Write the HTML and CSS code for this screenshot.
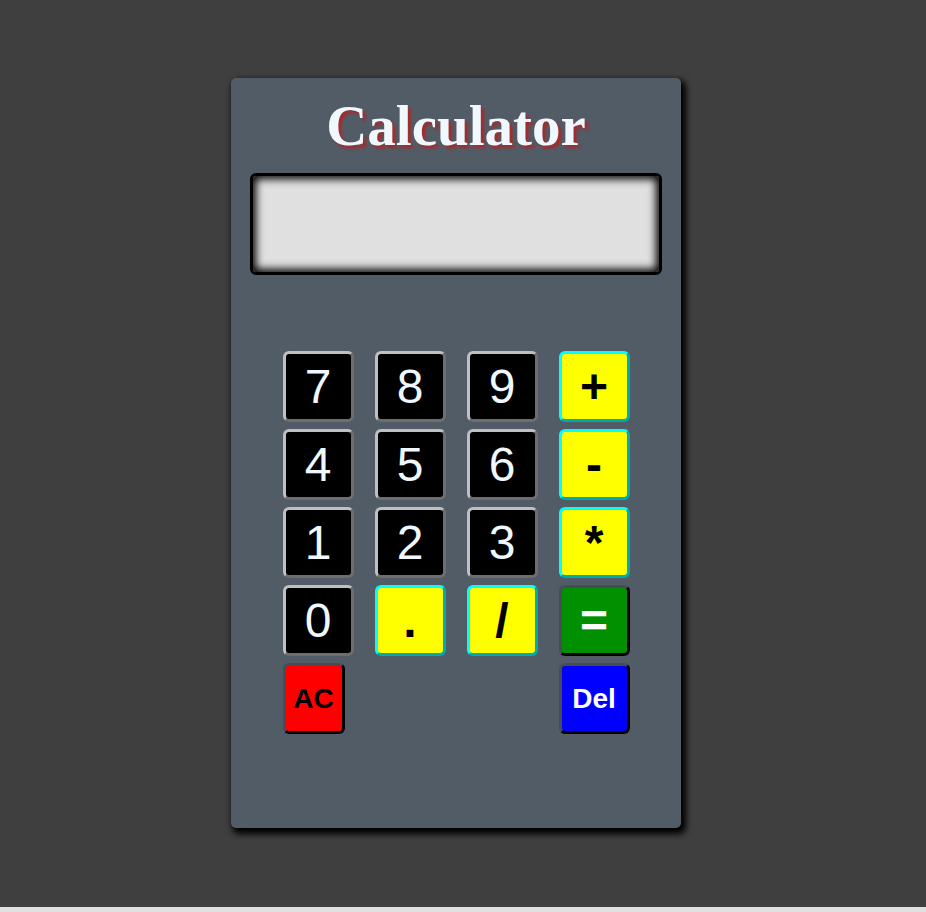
FILE: index.html
```html
<!DOCTYPE html>
<html lang="en">
<head>
<meta charset="utf-8">
<title>Calculator</title>
<link rel="stylesheet" href="styles.css">
</head>
<body>
<div class="calculator">
  <h1 class="title">Calculator</h1>
  <div class="display"></div>
  <div class="keys">
    <button class="key num">7</button>
    <button class="key num">8</button>
    <button class="key num">9</button>
    <button class="key op">+</button>
    <button class="key num">4</button>
    <button class="key num">5</button>
    <button class="key num">6</button>
    <button class="key op">-</button>
    <button class="key num">1</button>
    <button class="key num">2</button>
    <button class="key num">3</button>
    <button class="key op">*</button>
    <button class="key num">0</button>
    <button class="key op">.</button>
    <button class="key op">/</button>
    <button class="key equals">=</button>
    <button class="key clear">AC</button>
    <button class="key del">Del</button>
  </div>
</div>
</body>
</html>
```
FILE: styles.css
```css
html {
  background: #e0e0e2;
}
body {
  margin: 0;
  height: 907px;
  box-sizing: border-box;
  padding-top: 78px;
  background: #3f3f3f;
  overflow: hidden;
}
.calculator {
  width: 450px;
  height: 750px;
  margin-left: 231px;
  box-sizing: border-box;
  padding: 0 19px;
  background: #525c67;
  border-radius: 5px;
  box-shadow: 3px 4px 6px 2px #000;
  display: flex;
  flex-direction: column;
}
.title {
  margin: 17px 0 16px;
  font-family: "Liberation Serif", "Times New Roman", serif;
  font-weight: bold;
  font-size: 57px;
  line-height: 62px;
  text-align: center;
  color: #f0f8ff;
  text-shadow: 3px 3px 3px #a52a2a;
}
.display {
  height: 102px;
  box-sizing: border-box;
  background: #e0e0e0;
  border: 3px solid #000;
  border-radius: 6px;
  box-shadow: inset 0 0 8px 3px #000;
}
.keys {
  margin-top: 76px;
  display: grid;
  grid-template-columns: repeat(4, 71px);
  grid-auto-rows: 71px;
  column-gap: 21px;
  row-gap: 7px;
  justify-content: center;
}
.key {
  width: 71px;
  height: 71px;
  box-sizing: border-box;
  padding: 0;
  border: 3px solid;
  border-radius: 6px;
  font-family: "Liberation Sans", Arial, sans-serif;
  font-size: 48px;
  line-height: 1;
}
.num {
  background: #000;
  color: #f0f8ff;
  border-color: #c0c0c0 #6e6e6e #6e6e6e #c0c0c0;
}
.op {
  background: #ffff00;
  color: #000;
  font-weight: bold;
  border-color: #00ffff #00abab #00abab #00ffff;
}
.equals {
  background: #009000;
  color: #fff;
  font-weight: bold;
  border-color: #474d55 #000 #000 #474d55;
}
.clear {
  width: 62px;
  background: #ff0000;
  color: #000;
  font-weight: bold;
  font-size: 28px;
  border-color: #474d55 #000 #000 #474d55;
}
.del {
  grid-column: 4;
  background: #0000ff;
  color: #fff;
  font-weight: bold;
  font-size: 28px;
  border-color: #474d55 #000 #000 #474d55;
}
```
